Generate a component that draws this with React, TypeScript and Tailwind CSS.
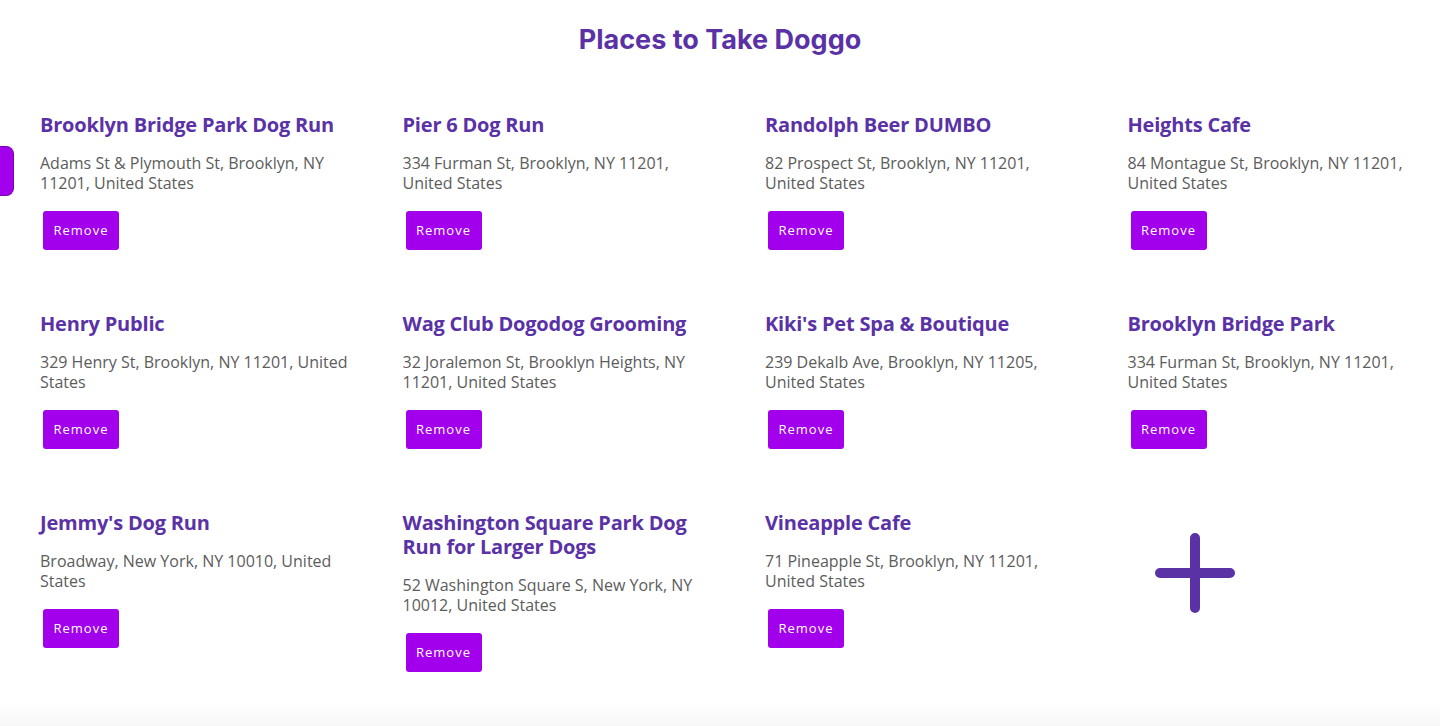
const places = [
  { name: 'Brooklyn Bridge Park Dog Run', address: 'Adams St & Plymouth St, Brooklyn, NY 11201, United States' },
  { name: 'Pier 6 Dog Run', address: '334 Furman St, Brooklyn, NY 11201, United States' },
  { name: 'Randolph Beer DUMBO', address: '82 Prospect St, Brooklyn, NY 11201, United States' },
  { name: 'Heights Cafe', address: '84 Montague St, Brooklyn, NY 11201, United States' },
  { name: 'Henry Public', address: '329 Henry St, Brooklyn, NY 11201, United States' },
  { name: 'Wag Club Dogodog Grooming', address: '32 Joralemon St, Brooklyn Heights, NY 11201, United States' },
  { name: "Kiki's Pet Spa & Boutique", address: '239 Dekalb Ave, Brooklyn, NY 11205, United States' },
  { name: 'Brooklyn Bridge Park', address: '334 Furman St, Brooklyn, NY 11201, United States' },
  { name: "Jemmy's Dog Run", address: 'Broadway, New York, NY 10010, United States' },
  { name: 'Washington Square Park Dog Run for Larger Dogs', address: '52 Washington Square S, New York, NY 10012, United States' },
  { name: 'Vineapple Cafe', address: '71 Pineapple St, Brooklyn, NY 11201, United States' },
];

type PlaceCardProps = {
  name: string;
  address: string;
};

const PlaceCard = ({ name, address }: PlaceCardProps) => (
  <div className="flex w-[312px] flex-col items-start">
    <h2 className="text-[20px] font-bold leading-6 text-[#5a32a6] font-['Open_Sans',sans-serif] tracking-[-0.2px]">
      {name}
    </h2>
    <p className="mt-[16px] text-[16px] leading-5 text-[#5c5c5c] font-['Open_Sans',sans-serif]">{address}</p>
    <button
      type="button"
      className="ml-[3px] mt-[18px] h-[39px] w-[76px] rounded-[3px] bg-[#a200ec] text-[13px] tracking-[1px] text-white font-['Open_Sans',sans-serif]"
    >
      Remove
    </button>
  </div>
);

export default function App() {
  return (
    <div className="relative h-[726px] w-[1440px] overflow-hidden bg-white">
      <div className="absolute left-0 top-[146px] h-[50px] w-[14px] rounded-r-[8px] border-y border-r border-[#7a00b8] bg-[#a200ec]" />

      <h1 className="pt-[22px] text-center text-[27px] font-bold leading-9 text-[#5a32a6] font-['Inter',sans-serif]">
        Places to Take Doggo
      </h1>

      <div className="mt-[55px] grid grid-cols-[repeat(4,362.5px)] gap-y-[62px] pl-[40px]">
        {places.map((place) => (
          <PlaceCard key={place.name} name={place.name} address={place.address} />
        ))}
        <div className="flex h-[124px] items-center pl-[26px]">
          <svg width="82" height="82" viewBox="0 0 82 82" fill="none">
            <path d="M41 6v70M6 41h70" stroke="#5a32a6" strokeWidth="10" strokeLinecap="round" />
          </svg>
        </div>
      </div>

      <div className="absolute bottom-0 left-0 h-[24px] w-full bg-gradient-to-b from-white to-[#f7f7f7]" />
    </div>
  );
}
